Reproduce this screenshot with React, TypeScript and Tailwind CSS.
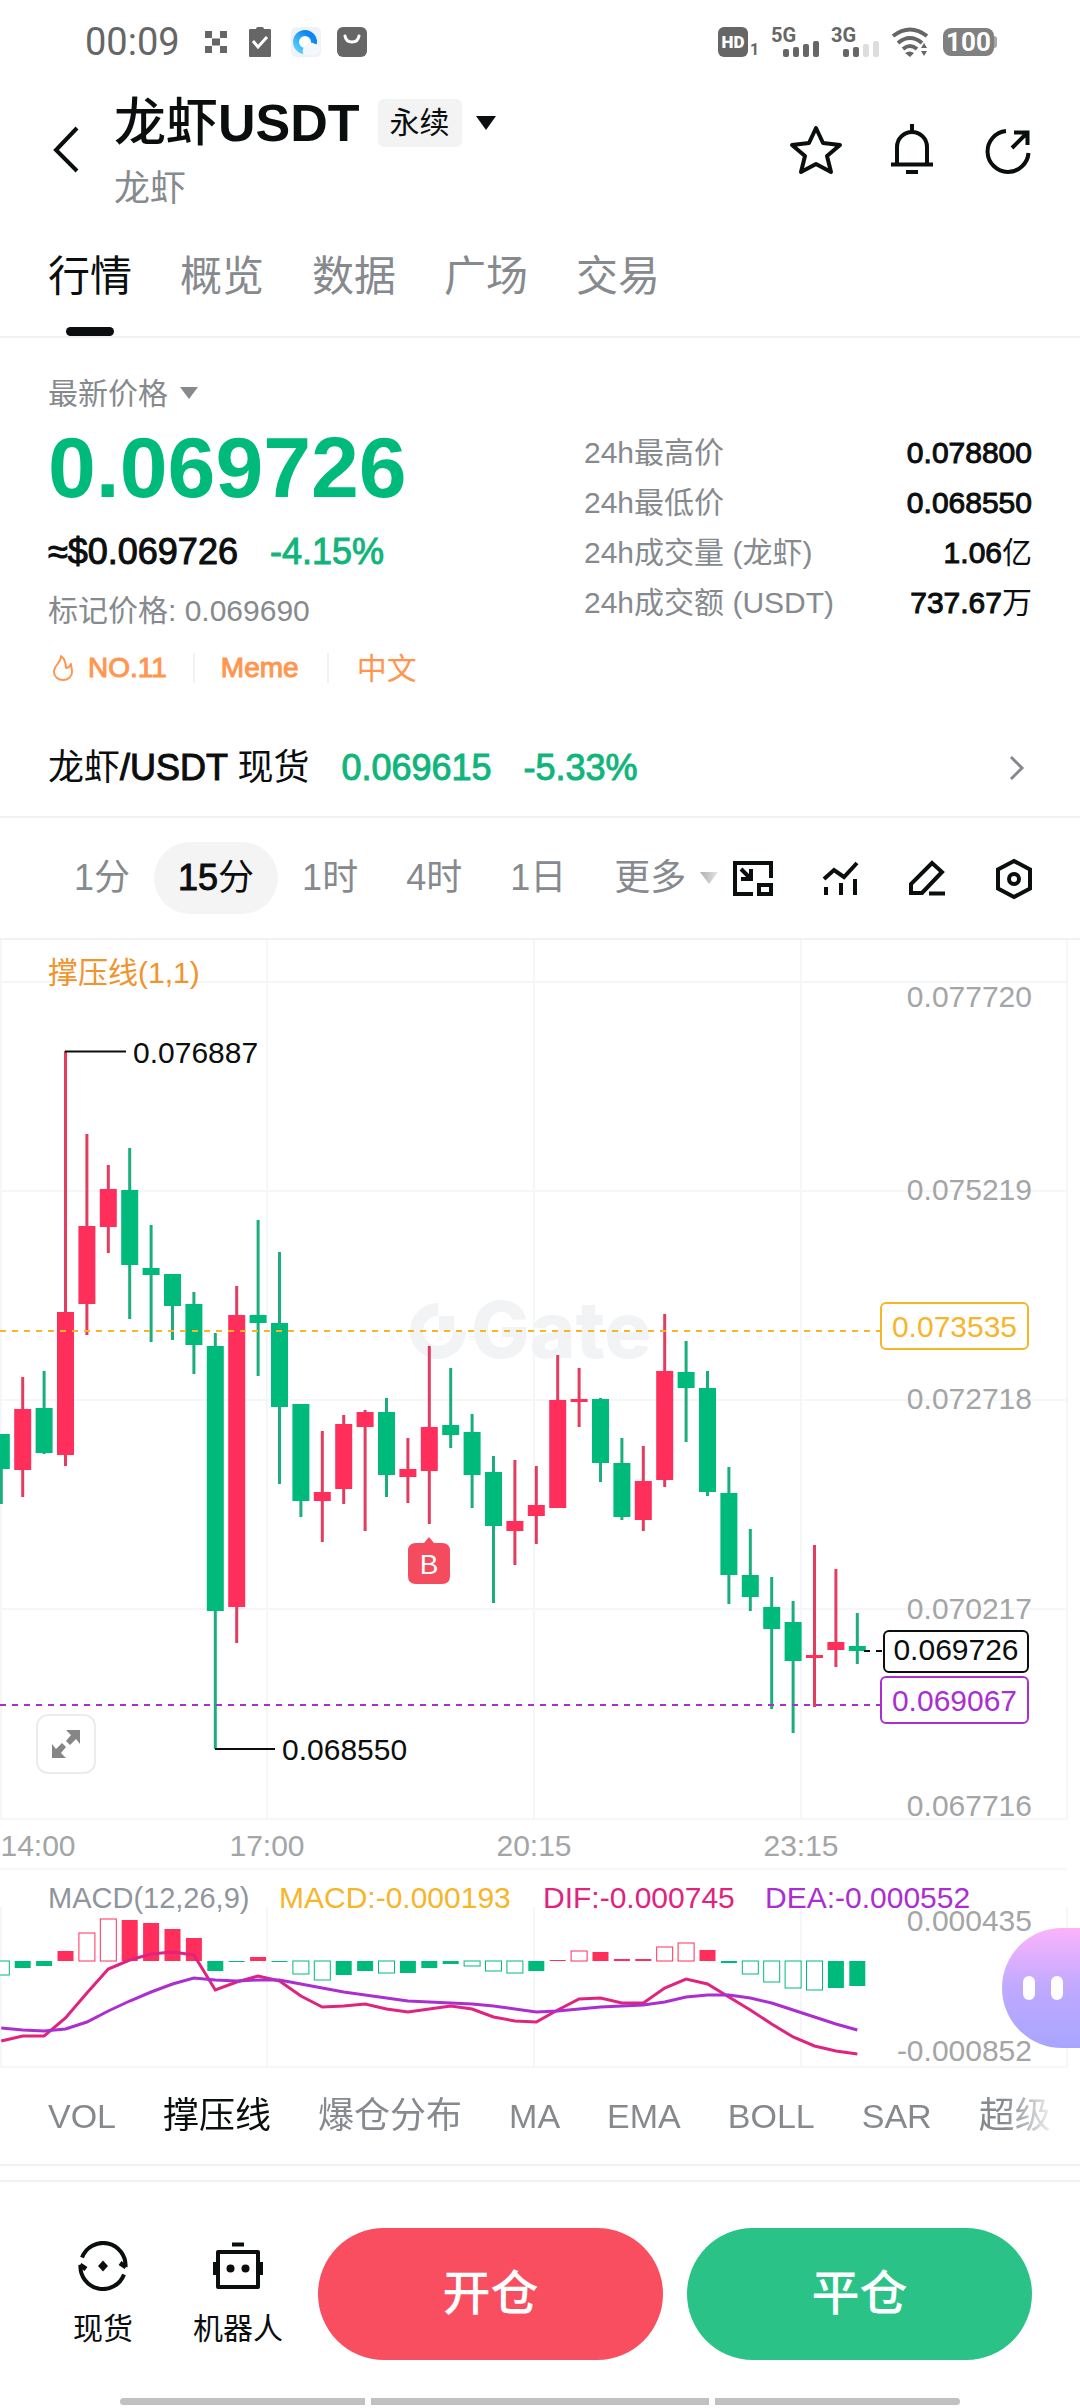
import React, { useState } from 'react';

const UP = '#ff2e5b';
const UP_WICK = '#e43c5e';
const DOWN = '#00ba7c';
const DOWN_WICK = '#1bae7a';
const GRID = '#f4f6f7';

const STEP = 21.4;
const centerX = (i: number) => 1.3 + STEP * i;

// [direction, high, body top, body bottom, low] in chart units
const candles: [string, number, number, number, number][] = [
  ['d', 494, 494, 529, 564],
  ['u', 437, 469, 530, 557],
  ['d', 431, 468, 513, 514],
  ['u', 111, 372, 515, 526],
  ['u', 194, 286, 364, 395],
  ['u', 225, 249, 287, 313],
  ['d', 208, 250, 325, 379],
  ['d', 285, 328, 335, 402],
  ['d', 334, 334, 366, 400],
  ['d', 352, 364, 405, 434],
  ['d', 393, 406, 671, 809],
  ['u', 346, 375, 667, 703],
  ['d', 280, 375, 383, 436],
  ['d', 312, 383, 467, 544],
  ['d', 464, 464, 561, 577],
  ['u', 491, 552, 561, 602],
  ['u', 475, 484, 549, 564],
  ['u', 470, 472, 487, 591],
  ['d', 458, 472, 535, 557],
  ['u', 498, 529, 537, 563],
  ['u', 406, 487, 531, 584],
  ['d', 428, 485, 495, 508],
  ['d', 474, 492, 535, 568],
  ['d', 516, 532, 586, 663],
  ['u', 520, 581, 591, 625],
  ['u', 526, 565, 576, 604],
  ['u', 415, 460, 568, 568],
  ['u', 428, 459, 462, 487],
  ['d', 458, 459, 523, 542],
  ['d', 498, 523, 577, 580],
  ['u', 506, 541, 580, 591],
  ['u', 374, 431, 540, 547],
  ['d', 401, 432, 448, 502],
  ['d', 431, 448, 552, 556],
  ['d', 527, 553, 635, 664],
  ['d', 589, 635, 657, 671],
  ['d', 637, 667, 689, 769],
  ['d', 661, 682, 721, 793],
  ['u', 605, 715, 718, 767],
  ['u', 629, 702, 710, 727],
  ['d', 673, 706, 711, 724],
];

// MACD histogram: signed height and whether the bar is hollow
const bars: [number, boolean][] = [
  [-14, true], [-7, false], [-5, false], [10, false], [28, true], [42, true],
  [41, false], [38, false], [32, false], [23, false], [-10, false], [-1, false],
  [4, false], [-1, false], [-13, true], [-19, true], [-14, false], [-10, false],
  [-12, true], [-12, false], [-7, false], [-3, false], [-5, true], [-10, true],
  [-12, true], [-10, false], [1, false], [10, true], [9, false], [2, false],
  [2, false], [14, true], [18, true], [11, false], [-2, false], [-13, true],
  [-21, true], [-27, true], [-29, true], [-27, false], [-25, false],
];

const dif = [
  171, 166, 166, 148, 123, 99, 90, 84, 82, 85, 120, 112, 106, 111, 126, 137, 136, 134, 139, 142, 139,
  136, 139, 147, 151, 152, 140, 129, 128, 133, 133, 118, 109, 114, 127, 140, 154, 167, 176, 181, 184,
];
const dea = [
  158, 160, 161, 159, 152, 141, 131, 122, 114, 108, 110, 111, 110, 110, 114, 118, 122, 125, 128, 131, 132,
  133, 134, 136, 139, 142, 141, 139, 137, 136, 135, 132, 127, 125, 125, 128, 133, 140, 147, 154, 160,
];

const toPoints = (ys: number[]) => ys.map((y, i) => `${centerX(i)},${y}`).join(' ');

const tabs = ['行情', '概览', '数据', '广场', '交易'];
const indicators = ['VOL', '撑压线', '爆仓分布', 'MA', 'EMA', 'BOLL', 'SAR', '超级'];
const frames = [
  ['1', '分'],
  ['15', '分'],
  ['1', '时'],
  ['4', '时'],
  ['1', '日'],
];
const stats = [
  ['24h最高价', '0.078800', ''],
  ['24h最低价', '0.068550', ''],
  ['24h成交量 (龙虾)', '1.06', '亿'],
  ['24h成交额 (USDT)', '737.67', '万'],
];

function Medium({ children }: { children: React.ReactNode }) {
  return <span className="[-webkit-text-stroke:1px_currentColor]">{children}</span>;
}

function Signal({ label, active }: { label: string; active: number }) {
  return (
    <svg className="h-9 w-12" viewBox="0 0 48 36" fill="#666">
      <text x="0" y="18" fontSize="20" fontWeight="700" fontFamily="Roboto, sans-serif">{label}</text>
      {[8, 10, 13, 16].map((h, i) => (
        <rect key={i} x={12 + i * 10} y={33 - h} width="6" height={h} rx="2" fill={i < active ? '#666' : '#ddd'} />
      ))}
    </svg>
  );
}

function StatusBar() {
  return (
    <div className="flex h-[84px] items-center pr-[83px] pl-[85px] text-[#666]">
      <span className="font-[Roboto,sans-serif] text-[38px] leading-[48px]">00:09</span>
      <svg className="ml-6 h-6 w-6" viewBox="0 0 24 24" fill="#666">
        <path d="M1 1h7v7H1zM16 1h7v7h-7zM8 8.500h8v7H8zM1 16h7v7H1zM16 16h7v7h-7z" />
      </svg>
      <svg className="ml-5 h-8 w-6" viewBox="0 0 24 32">
        <path d="M1 4q0-1 1-1h6q0-2 2-2h4q2 0 2 2h6q1 0 1 1v26q0 1-1 1H2q-1 0-1-1z" fill="#666" />
        <path d="M5 15l5 6 9-10" fill="none" stroke="#fff" strokeWidth="3" />
      </svg>
      <svg className="ml-[18px] h-8 w-8" viewBox="0 0 32 32">
        <defs>
          <linearGradient id="ring" x1="1" y1="0" x2="0" y2="1">
            <stop offset="0.2" stopColor="#0b87f2" />
            <stop offset="1" stopColor="#5fd0ff" />
          </linearGradient>
        </defs>
        <rect x="1" y="1" width="30" height="30" rx="5" fill="#eef3fa" />
        <circle cx="15" cy="16" r="9" fill="#fff" stroke="url(#ring)" strokeWidth="6" />
        <path d="M15 29a5 5 0 0 1 1-9 6 6 0 0 1 9-2 5 5 0 0 1 3 9q-1 2-4 2z" fill="#f4f8fd" />
      </svg>
      <svg className="ml-[14px] h-8 w-8" viewBox="0 0 32 32">
        <rect x="1" y="1" width="30" height="30" rx="6" fill="#666" />
        <path d="M9 10q1 6 7 6t7-6" fill="none" stroke="#fff" strokeWidth="3" strokeLinecap="round" />
      </svg>

      <div className="ml-auto flex items-center">
        <svg className="h-8 w-11" viewBox="0 0 44 32" fill="#666" fontFamily="Roboto, sans-serif">
          <rect x="1" y="1" width="30" height="30" rx="6" />
          <text x="16" y="22" fontSize="17" fontWeight="900" fill="#fff" textAnchor="middle">HD</text>
          <text x="33" y="29" fontSize="16" fontWeight="700">1</text>
        </svg>
        <div className="ml-[10px] flex gap-3">
          <Signal label="5G" active={4} />
          <Signal label="3G" active={2} />
        </div>
        <svg className="ml-3 h-8 w-10" viewBox="0 0 40 32" fill="none" stroke="#666" strokeWidth="4">
          <path d="M2 10q17-13 34 0" />
          <path d="M7 17q12-10 24 0" />
          <path d="M12 23q7-6 14 0" />
          <path d="M14 27q5-3 9 0l-4 4zM30 22l3-5 3 5zM30 25h6l-3 5z" fill="#666" stroke="none" />
        </svg>
        <div className="ml-3 flex items-center">
          <span className="flex h-7 w-[51px] items-center justify-center rounded-lg bg-[#808080] font-[Roboto,sans-serif] text-[26px] leading-7 font-bold text-white">
            100
          </span>
          <span className="h-3 w-[3px] rounded-r bg-[#a6a6a6]" />
        </div>
      </div>
    </div>
  );
}

function Header() {
  return (
    <header className="flex h-[132px] items-center pr-[42px] pl-9">
      <button aria-label="返回" className="w-[60px]">
        <svg className="h-[60px] w-[60px]" viewBox="0 0 60 60" fill="none" stroke="#0b0e0e" strokeWidth="4">
          <path d="M41 8L20 30l21 21" />
        </svg>
      </button>
      <div className="ml-[18px]">
        <div className="flex h-[78px] items-center">
          <h1 className="flex items-center text-[52px] leading-none">
            <span className="font-medium">龙虾</span>
            <span className="font-bold">USDT</span>
          </h1>
          <span className="ml-[18px] flex h-12 items-center rounded-md bg-[#f3f3f4] px-3 text-[30px] leading-none">永续</span>
          <button aria-label="切换合约" className="ml-3">
            <svg className="h-4 w-6" viewBox="0 0 24 16">
              <path d="M2 1h20L12 15z" fill="#0b0e0e" />
            </svg>
          </button>
        </div>
        <p className="h-[54px] text-[36px] leading-[54px] text-[#868a8e]">龙虾</p>
      </div>
      <div className="ml-auto flex gap-9">
        <button aria-label="收藏">
          <svg className="h-[60px] w-[60px]" viewBox="0 0 60 60" fill="none" stroke="#0b0e0e" strokeWidth="4" strokeLinejoin="round">
            <path d="M30 8l7 15 17 2-13 11 4 16-15-8-15 8 4-16L6 25l17-2z" />
          </svg>
        </button>
        <button aria-label="提醒">
          <svg className="h-[60px] w-[60px]" viewBox="0 0 60 60" fill="none" stroke="#0b0e0e" strokeWidth="4">
            <path d="M15 44V27a15 15 0 0 1 30 0v17M9 44.500h42M24 52h12M30 4v8" />
          </svg>
        </button>
        <button aria-label="分享">
          <svg className="h-[60px] w-[60px]" viewBox="0 0 60 60" fill="none" stroke="#0b0e0e" strokeWidth="4">
            <path d="M28 11A20.500 20.500 0 1 0 50.500 33M34 28l15-15M36 12.500h13.500V25" />
          </svg>
        </button>
      </div>
    </header>
  );
}

function PriceSummary() {
  return (
    <section className="flex justify-between px-12 pt-8">
      <div>
        <button className="flex h-[46px] items-center text-[30px] text-[#868a8e]">
          最新价格
          <svg className="ml-3 h-3 w-[18px]" viewBox="0 0 18 12">
            <path d="M0 0h18L9 12z" fill="#868a8e" />
          </svg>
        </button>
        <p className="h-[102px] text-[86px] leading-[102px] font-bold text-[#00ba7c]">0.069726</p>
        <p className="h-[68px] text-[36px] leading-[68px]">
          <Medium>≈$0.069726</Medium>
          <span className="ml-8 text-[#11b57c]"><Medium>-4.15%</Medium></span>
        </p>
        <p className="h-[50px] text-[30px] leading-[50px] text-[#868a8e]">标记价格: 0.069690</p>
        <div className="flex h-16 items-center text-[28px] text-[#ff9650]">
          <svg className="h-7 w-8" viewBox="0 0 32 28" fill="none" stroke="#ff9650" strokeWidth="2" strokeLinejoin="round">
            <path d="M13 2c0 7-7 9-7 16a9 8 0 0 0 18 0c0-4-1-6-1-8-1 2-3 4-5 4 0-5-1-9-5-12z" />
          </svg>
          <span className="ml-2"><Medium>NO.11</Medium></span>
          <span className="mx-[26px] h-[30px] w-[2px] bg-[#f1f2f3]" />
          <span><Medium>Meme</Medium></span>
          <span className="mx-7 h-[30px] w-[2px] bg-[#f1f2f3]" />
          <span className="text-[30px]">中文</span>
        </div>
      </div>
      <dl className="w-[448px] pt-[58px] text-[30px] leading-[50px]">
        {stats.map(([label, value, unit]) => (
          <div key={label} className="flex justify-between">
            <dt className="text-[#868a8e]">{label}</dt>
            <dd>
              <Medium>{value}</Medium>
              {unit}
            </dd>
          </div>
        ))}
      </dl>
    </section>
  );
}

function SpotRow() {
  return (
    <a href="#spot" className="mt-5 flex h-[98px] items-center border-b-2 border-[#f1f3f3] px-12 text-[36px]">
      <span>龙虾<Medium>/USDT</Medium> 现货</span>
      <span className="ml-8 text-[#11b57c]"><Medium>0.069615</Medium></span>
      <span className="ml-8 text-[#11b57c]"><Medium>-5.33%</Medium></span>
      <svg className="ml-auto h-8 w-8" viewBox="0 0 32 32" fill="none" stroke="#868a8e" strokeWidth="3">
        <path d="M11 5l11 11-11 11" />
      </svg>
    </a>
  );
}

function FrameBar() {
  const [active, setActive] = useState(1);

  return (
    <div className="flex h-[122px] items-center border-b-2 border-[#f1f3f3] pr-[42px] pl-[50px] text-[36px]">
      {frames.map(([n, unit], i) => (
        <button
          key={n + unit}
          onClick={() => setActive(i)}
          className={`h-[72px] rounded-full px-6 ${i === active ? 'bg-[#f4f4f5] text-[#0b0e0e]' : 'text-[#868a8e]'}`}
        >
          {i === active ? <Medium>{n}</Medium> : n}
          {unit}
        </button>
      ))}
      <button className="flex h-[72px] items-center pl-6 text-[#868a8e]">
        更多
        <svg className="ml-[14px] h-3 w-[18px]" viewBox="0 0 18 12">
          <defs>
            <linearGradient id="fade">
              <stop offset="0" stopColor="#b0b0b0" />
              <stop offset="1" stopColor="#e4e4e4" />
            </linearGradient>
          </defs>
          <path d="M0 0h18L9 12z" fill="url(#fade)" />
        </svg>
      </button>
      <div className="ml-auto flex gap-[39px]">
        <button aria-label="小窗">
          <svg className="h-12 w-12" viewBox="0 0 48 48" fill="none" stroke="#0b0e0e" strokeWidth="4">
            <path d="M24 40H6V9h36v15M12 15l9 9M22 15v10H12" />
            <path d="M30 31h12v9H30z" />
          </svg>
        </button>
        <button aria-label="指标">
          <svg className="h-12 w-12" viewBox="0 0 48 48" fill="none" stroke="#0b0e0e" strokeWidth="4">
            <path d="M8 25l10-9 10 7L41 9M10 33v8M25 29v12M39 25v16" />
          </svg>
        </button>
        <button aria-label="画线">
          <svg className="h-12 w-12" viewBox="0 0 48 48" fill="none" stroke="#0b0e0e" strokeWidth="4">
            <path d="M8 39v-9L29 9l10 9-20 21zM26 39.500h16" />
          </svg>
        </button>
        <button aria-label="设置">
          <svg className="h-12 w-12" viewBox="0 0 48 48" fill="none" stroke="#0b0e0e" strokeWidth="4">
            <path d="M24 7l16 8.500v19L24 43 8 34.500v-19z" />
            <circle cx="24" cy="25" r="5" />
          </svg>
        </button>
      </div>
    </div>
  );
}

type TagProps = { x: number; y: number; h: number; line: number; from: number; color: string; value: string };

function PriceTag({ x, y, h, line, from, color, value }: TagProps) {
  return (
    <g>
      <line x1={from} x2={x} y1={line} y2={line} stroke={color} strokeWidth="2" strokeDasharray="6 6" />
      <rect x={x} y={y} width={1028 - x} height={h} rx="5" fill="#fff" stroke={color} strokeWidth="2" />
      <text x={(x + 1028) / 2} y={y + h - 12} fill={color} textAnchor="middle">{value}</text>
    </g>
  );
}

function PriceChart() {
  return (
    <svg className="block h-auto w-full" viewBox="0 0 1080 930" fontSize="30">
      <g stroke={GRID} strokeWidth="2">
        {[1, 267, 534, 801, 1067].map((x) => <line key={x} x1={x} x2={x} y1="0" y2="879" />)}
        {[42, 251, 460, 669, 879, 929].map((y) => <line key={y} x1="0" x2="1067" y1={y} y2={y} />)}
      </g>

      {/* Watermark */}
      <g fill="#f2f3f4">
        <path d="M438 369.500A21.500 21.500 0 1 0 459.500 391" fill="none" stroke="#f2f3f4" strokeWidth="13" />
        <rect x="439" y="376" width="15" height="15" />
        <text x="471" y="418" fontSize="78" fontWeight="800" fontFamily="Inter, sans-serif">Gate</text>
      </g>

      {candles.map(([dir, high, top, bottom, low], i) => (
        <g key={i}>
          <rect x={centerX(i) - 1.5} y={high} width="3" height={low - high} fill={dir === 'u' ? UP_WICK : DOWN_WICK} />
          <rect x={centerX(i) - 8.5} y={top} width="17" height={bottom - top} fill={dir === 'u' ? UP : DOWN} />
        </g>
      ))}

      <text x="48" y="43" fill="#f0942d">撑压线(1,1)</text>

      <g fill="#0b0e0e">
        <path d="M65 111.500h61M215 809h60" stroke="#0b0e0e" strokeWidth="2" />
        <text x="133" y="123">0.076887</text>
        <text x="282" y="820">0.068550</text>
      </g>

      <g fill="#a3a5a7" textAnchor="end">
        <text x="1032" y="67">0.077720</text>
        <text x="1032" y="260">0.075219</text>
        <text x="1032" y="469">0.072718</text>
        <text x="1032" y="679">0.070217</text>
        <text x="1032" y="876">0.067716</text>
      </g>

      <PriceTag x={881} y={363} h={46} line={391} from={0} color="#f7b52a" value="0.073535" />
      <PriceTag x={884} y={691} h={41} line={711} from={864} color="#0b0e0e" value="0.069726" />
      <PriceTag x={881} y={737} h={46} line={765} from={0} color="#ab2fd0" value="0.069067" />

      {/* Buy marker */}
      <path d="M416 603h8l5-6 5 6h8q8 0 8 8v25q0 8-8 8h-26q-8 0-8-8v-25q0-8 8-8z" fill="#f54b5e" />
      <text x="429" y="634" fill="#fff" fontSize="28" textAnchor="middle">B</text>

      <g fill="#a3a5a7" textAnchor="middle">
        <text x="38" y="916">14:00</text>
        <text x="267" y="916">17:00</text>
        <text x="534" y="916">20:15</text>
        <text x="801" y="916">23:15</text>
      </g>
    </svg>
  );
}

function MacdChart() {
  return (
    <svg className="block h-auto w-full" viewBox="0 0 1080 198" fontSize="30">
      <g stroke={GRID} strokeWidth="2">
        {[1, 267, 534, 801, 1067].map((x) => <line key={x} x1={x} x2={x} y1="37" y2="197" />)}
        <line x1="0" x2="1067" y1="197" y2="197" />
      </g>

      {bars.map(([v, hollow], i) => {
        const color = v > 0 ? UP : DOWN;
        const y = v > 0 ? 91 - v : 91;
        return hollow ? (
          <rect key={i} x={centerX(i) - 8} y={y} width="16" height={Math.abs(v)} fill="#fff" stroke={color} strokeWidth="1" />
        ) : (
          <rect key={i} x={centerX(i) - 8} y={y} width="16" height={Math.abs(v)} fill={color} />
        );
      })}
      <polyline points={toPoints(dif)} fill="none" stroke="#e0237f" strokeWidth="3" />
      <polyline points={toPoints(dea)} fill="none" stroke="#ab2fd0" strokeWidth="3" />

      <text x="48" y="38" fontSize="29" fill="#8f959c">MACD(12,26,9)</text>
      <text x="279" y="38" fill="#f7b52a">MACD:-0.000193</text>
      <text x="543" y="38" fill="#e0237f">DIF:-0.000745</text>
      <text x="765" y="38" fill="#ab2fd0">DEA:-0.000552</text>
      <g fill="#a3a5a7" textAnchor="end">
        <text x="1032" y="61">0.000435</text>
        <text x="1032" y="191">-0.000852</text>
      </g>
    </svg>
  );
}

function Charts() {
  return (
    <section className="relative">
      <PriceChart />
      <MacdChart />
      <button
        aria-label="全屏"
        className="absolute bottom-[294px] left-9 flex h-[60px] w-[60px] items-center justify-center rounded-xl border-2 border-[#ececec] bg-white"
      >
        <svg className="h-7 w-7" viewBox="0 0 28 28" fill="#868686">
          <path d="M14 0h14v14l-4-5-6 6-4-4 5-6zM14 28H0V14l4 5 6-6 4 4-5 6z" />
        </svg>
      </button>
      <button
        aria-label="助手"
        className="absolute right-0 bottom-5 flex h-[120px] w-[78px] items-center justify-center gap-4 rounded-l-full bg-gradient-to-b from-[#fbb3fb] via-[#bfa9ff] to-[#a8a5ff] pl-1"
      >
        <span className="h-6 w-3 rounded-full bg-white" />
        <span className="h-6 w-3 rounded-full bg-white" />
      </button>
    </section>
  );
}

function IndicatorBar() {
  const [active, setActive] = useState('撑压线');

  return (
    <div className="border-b-2 border-[#f1f3f3]">
      <div className="flex h-24 items-center gap-[47px] overflow-hidden pl-12 whitespace-nowrap [mask-image:linear-gradient(to_right,black_93%,transparent_98%)]">
        {indicators.map((name) => (
          <button
            key={name}
            onClick={() => setActive(name)}
            className={`${/[A-Z]/.test(name) ? 'text-[34px]' : 'text-[36px]'} ${name === active ? 'text-[#0b0e0e]' : 'text-[#868a8e]'}`}
          >
            {name}
          </button>
        ))}
      </div>
    </div>
  );
}

function BottomBar() {
  return (
    <footer className="mt-[14px] border-t-2 border-[#f1f3f3] pt-[46px] pb-[3px]">
      <div className="flex h-[132px] pr-12 pl-12">
        <button className="flex w-[110px] flex-col items-center justify-center gap-5">
          <svg className="h-[50px] w-[50px]" viewBox="0 0 50 50" fill="none" stroke="#0b0e0e" strokeWidth="4">
            <path d="M4 16.500A22.500 22.500 0 0 1 47.500 26M46 33.500A22.500 22.500 0 0 1 2.500 24" />
            <path d="M25 19.500l5 5.500-5 5.500-5-5.500z" fill="#0b0e0e" stroke="none" />
            <path d="M42 22l6 4M8 28l-6-4" strokeWidth="5" />
          </svg>
          <span className="text-[30px] leading-9">现货</span>
        </button>
        <button className="flex w-[160px] flex-col items-center justify-center gap-5">
          <svg className="h-[50px] w-[50px]" viewBox="0 0 50 50" fill="none" stroke="#0b0e0e" strokeWidth="4">
            <path d="M5 11h40v35H5zM19 3.500h12M2 21v13M48 21v13" strokeLinejoin="round" />
            <circle cx="17.500" cy="27.500" r="4" fill="#0b0e0e" stroke="none" />
            <circle cx="32.500" cy="27.500" r="4" fill="#0b0e0e" stroke="none" />
          </svg>
          <span className="text-[30px] leading-9">机器人</span>
        </button>
        <div className="flex flex-1 gap-6 text-5xl font-medium text-white">
          <button className="flex-1 rounded-full bg-[#f84e60]">开仓</button>
          <button className="flex-1 rounded-full bg-[#2bc287]">平仓</button>
        </div>
      </div>
      <div className="mx-[120px] mt-[38px] flex h-[7px] gap-[6px]">
        <span className="w-[245px] rounded-l-full bg-[#c1c1c1]" />
        <span className="flex-1 bg-[#c1c1c1]" />
        <span className="w-[245px] rounded-r-full bg-[#c1c1c1]" />
      </div>
    </footer>
  );
}

export default function App() {
  const [tab, setTab] = useState('行情');

  return (
    <div className="w-full overflow-hidden bg-white font-['Liberation_Sans','Noto_Sans_CJK_SC',sans-serif] text-[#0b0e0e]">
      <StatusBar />
      <Header />
      <nav className="flex h-[122px] gap-12 border-b-2 border-[#f1f3f3] px-12 text-[42px]">
        {tabs.map((name) => (
          <button
            key={name}
            onClick={() => setTab(name)}
            className={`relative h-[120px] ${name === tab ? 'text-[#0b0e0e]' : 'text-[#868a8e]'}`}
          >
            {name}
            {name === tab && <span className="absolute bottom-0 left-[18px] h-[9px] w-12 rounded-full bg-[#0b0e0e]" />}
          </button>
        ))}
      </nav>
      <PriceSummary />
      <SpotRow />
      <FrameBar />
      <Charts />
      <IndicatorBar />
      <BottomBar />
    </div>
  );
}
